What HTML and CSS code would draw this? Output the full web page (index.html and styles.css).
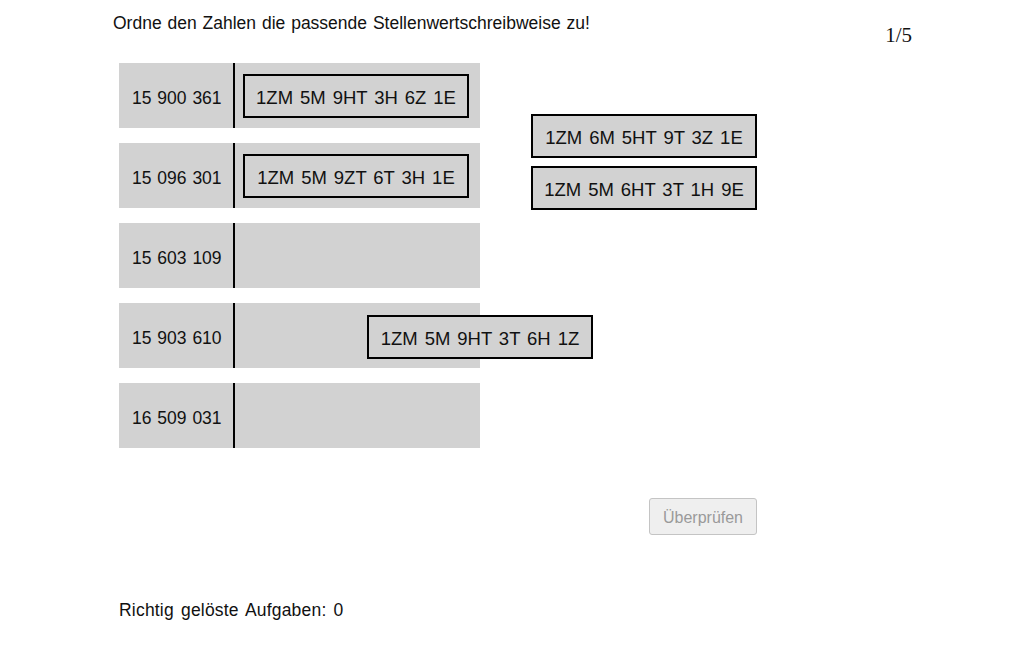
FILE: index.html
```html
<!DOCTYPE html>
<html lang="de">
<head>
<meta charset="utf-8">
<title>Stellenwert</title>
<link rel="stylesheet" href="styles.css">
</head>
<body>
<div class="page">
  <header class="header">
    <h1 class="title">Ordne den Zahlen die passende Stellenwertschreibweise zu!</h1>
    <div class="counter">1/5</div>
  </header>
  <main class="task">
    <div class="rows">
      <div class="row"><div class="num">15 900 361</div><div class="drop"><div class="chip">1ZM 5M 9HT 3H 6Z 1E</div></div></div>
      <div class="row"><div class="num">15 096 301</div><div class="drop"><div class="chip">1ZM 5M 9ZT 6T 3H 1E</div></div></div>
      <div class="row"><div class="num">15 603 109</div><div class="drop"></div></div>
      <div class="row"><div class="num">15 903 610</div><div class="drop"></div></div>
      <div class="row"><div class="num">16 509 031</div><div class="drop"></div></div>
    </div>
    <div class="side">
      <div class="pool">
        <div class="chip filled">1ZM 6M 5HT 9T 3Z 1E</div>
        <div class="chip filled">1ZM 5M 6HT 3T 1H 9E</div>
      </div>
      <button class="check" type="button">Überprüfen</button>
    </div>
    <div class="chip dragging">1ZM 5M 9HT 3T 6H 1Z</div>
  </main>
  <footer class="score">Richtig gelöste Aufgaben: 0</footer>
</div>
</body>
</html>
```
FILE: styles.css
```css
* { box-sizing: border-box; }
html, body { margin: 0; padding: 0; background: #fff; }
body {
  font-family: "Liberation Sans", Arial, sans-serif;
  color: #111;
  width: 1032px;
  height: 645px;
  overflow: hidden;
}
.page { position: relative; }
.header {
  display: flex;
  justify-content: space-between;
  padding: 12px 120px 0 113px;
  height: 63px;
}
.title {
  margin: 0;
  font-size: 17.5px;
  font-weight: normal;
  line-height: 22px;
  word-spacing: 1px;
}
.counter {
  font-family: "Liberation Serif", "Times New Roman", serif;
  font-size: 21px;
  margin-top: 11px;
  line-height: 24px;
}
.task {
  position: relative;
  display: flex;
  padding-left: 119px;
  gap: 51px;
}
.rows {
  display: flex;
  flex-direction: column;
  gap: 15px;
  width: 361px;
}
.row {
  display: flex;
  height: 65px;
  background: #d2d2d2;
}
.num {
  width: 116px;
  padding: 5px 0 0 13px;
  display: flex;
  align-items: center;
  font-size: 17.5px;
  word-spacing: 1px;
  border-right: 2px solid #000;
}
.drop {
  flex: 1;
  display: flex;
  align-items: center;
  padding-left: 8px;
}
.chip {
  width: 226px;
  height: 44px;
  border: 2px solid #000;
  display: flex;
  align-items: center;
  justify-content: center;
  padding-top: 4px;
  font-size: 18.5px;
  word-spacing: 1.8px;
}
.filled { background: #d2d2d2; }
.side {
  display: flex;
  flex-direction: column;
  align-items: flex-end;
  width: 226px;
}
.pool {
  margin-top: 51px;
  display: flex;
  flex-direction: column;
  gap: 8px;
}
.check {
  margin-top: 288px;
  width: 108px;
  height: 37px;
  border: 1px solid #c4c4c4;
  border-radius: 3px;
  background: #efefef;
  color: #9a9a9a;
  font-family: "Liberation Sans", Arial, sans-serif;
  font-size: 16px;
  padding: 2px 0 0;
}
.dragging {
  position: absolute;
  left: 367px;
  top: 252px;
  background: #d2d2d2;
}
.score {
  position: absolute;
  top: 599px;
  left: 119px;
  font-size: 17.5px;
  line-height: 22px;
  word-spacing: 2px;
  letter-spacing: 0.2px;
}
```
